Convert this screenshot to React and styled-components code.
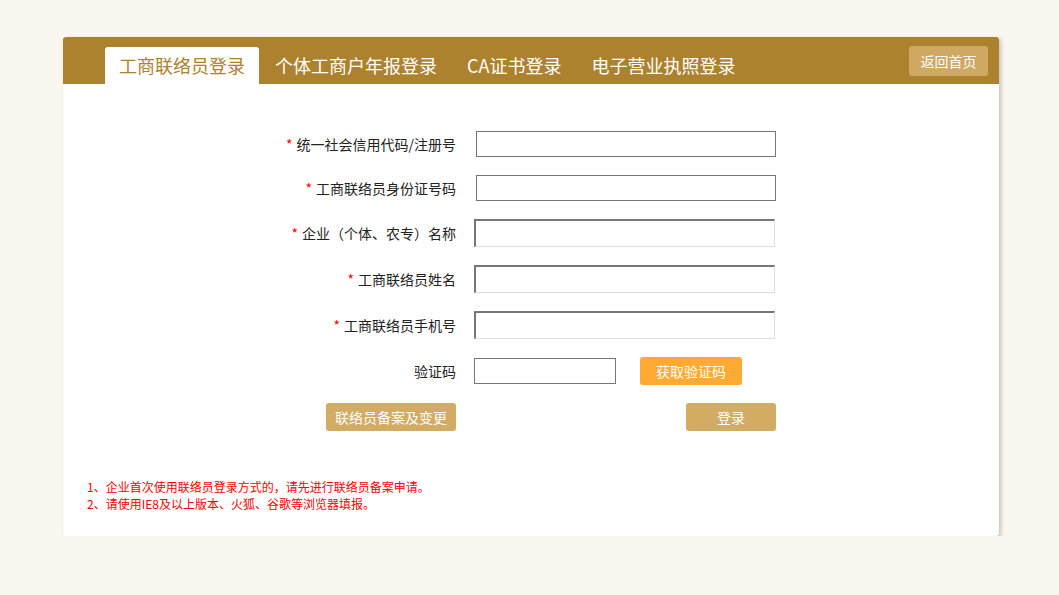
import React from "react";
import styled, { createGlobalStyle } from "styled-components";

const GlobalStyle = createGlobalStyle`
  body {
    margin: 0;
    background-color: #faf7f0;
    font-family: "Noto Sans CJK SC", "Liberation Sans", sans-serif;
  }
`;

const tabs = ["工商联络员登录", "个体工商户年报登录", "CA证书登录", "电子营业执照登录"];

const fields = [
  { label: "统一社会信用代码/注册号", inset: false },
  { label: "工商联络员身份证号码", inset: false },
  { label: "企业（个体、农专）名称", inset: true },
  { label: "工商联络员姓名", inset: true },
  { label: "工商联络员手机号", inset: true },
];

export default function App() {
  return (
    <>
      <GlobalStyle />
      <Card>
        <Header>
          <Tabs>
            {tabs.map((t, i) => (
              <Tab key={t} active={i === 0}>
                {t}
              </Tab>
            ))}
          </Tabs>
          <HomeButton>返回首页</HomeButton>
        </Header>

        <Form>
          {fields.map((f) => (
            <Row key={f.label}>
              <Label>
                <Star>*</Star> {f.label}
              </Label>
              <Cell>
                <Input inset={f.inset} />
              </Cell>
            </Row>
          ))}
          <Row>
            <Label>验证码</Label>
            <Cell>
              <CodeInput />
              <CodeButton>获取验证码</CodeButton>
            </Cell>
          </Row>
          <Row>
            <Label>
              <GoldButton width={130}>联络员备案及变更</GoldButton>
            </Label>
            <Cell end>
              <GoldButton width={90}>登录</GoldButton>
            </Cell>
          </Row>
        </Form>

        <Notes>
          <p>1、企业首次使用联络员登录方式的，请先进行联络员备案申请。</p>
          <p>2、请使用IE8及以上版本、火狐、谷歌等浏览器填报。</p>
        </Notes>
      </Card>
    </>
  );
}

const Card = styled.div`
  width: 936px;
  margin: 37px 0 0 63px;
  background-color: #fff;
  border-radius: 3px;
  box-shadow: 2px 2px 4px rgba(0, 0, 0, 0.22);
  padding-bottom: 24px;
`;

const Header = styled.div`
  height: 47px;
  background-color: #ad822e;
  border-radius: 3px 3px 0 0;
  display: flex;
  justify-content: space-between;
  padding: 0 11px 0 42px;
`;

const Tabs = styled.div`
  display: flex;
  align-items: flex-end;
  gap: 2px;
`;

const Tab = styled.div`
  height: 37px;
  line-height: 37px;
  padding: 0 14px;
  font-size: 18px;
  border-radius: 3px 3px 0 0;
  background-color: ${(p) => (p.active ? "#fff" : "transparent")};
  color: ${(p) => (p.active ? "#ad822e" : "#fff")};
  cursor: pointer;
`;

const HomeButton = styled.div`
  margin-top: 9px;
  width: 79px;
  height: 30px;
  line-height: 30px;
  text-align: center;
  font-size: 14px;
  color: #fff;
  background-color: #cfa862;
  border-radius: 3px;
  cursor: pointer;
`;

const Form = styled.div`
  display: flex;
  flex-direction: column;
  gap: 18px;
  padding-top: 47px;
`;

const Row = styled.div`
  display: grid;
  grid-template-columns: 411px 302px;
  align-items: center;
  min-height: 26px;
`;

const Label = styled.div`
  text-align: right;
  padding-right: 18px;
  font-size: 14px;
  color: #222;
  display: flex;
  justify-content: flex-end;
  align-items: center;
`;

const Star = styled.span`
  color: #f00;
  margin-right: 4px;
`;

const Cell = styled.div`
  display: flex;
  align-items: center;
  justify-content: ${(p) => (p.end ? "flex-end" : "flex-start")};
  gap: 24px;
`;

const Input = styled.input`
  box-sizing: border-box;
  flex-shrink: 0;
  margin: 0 0 0 ${(p) => (p.inset ? "0" : "2px")};
  width: ${(p) => (p.inset ? "301px" : "300px")};
  height: ${(p) => (p.inset ? "28px" : "26px")};
  background: #fff;
  outline: none;
  border: ${(p) => (p.inset ? "1px solid #ddd" : "1px solid #777")};
  border-top: ${(p) => (p.inset ? "2px solid #777" : "1px solid #777")};
  border-left: ${(p) => (p.inset ? "2px solid #777" : "1px solid #777")};
`;

const CodeInput = styled.input`
  box-sizing: border-box;
  flex-shrink: 0;
  margin: 0;
  width: 142px;
  height: 26px;
  border: 1px solid #777;
  outline: none;
`;

const CodeButton = styled.div`
  width: 102px;
  height: 28px;
  line-height: 28px;
  text-align: center;
  color: #fff;
  font-size: 14px;
  background-color: #ffaa33;
  border-radius: 3px;
  cursor: pointer;
`;

const GoldButton = styled.div`
  width: ${(p) => p.width}px;
  height: 28px;
  line-height: 28px;
  text-align: center;
  color: #fff;
  font-size: 14px;
  background-color: #d2ab64;
  border-radius: 3px;
  cursor: pointer;
`;

const Notes = styled.div`
  margin-top: 47px;
  padding-left: 24px;
  color: #f00;
  font-size: 12px;

  p {
    margin: 0;
    line-height: 17px;
  }
`;
